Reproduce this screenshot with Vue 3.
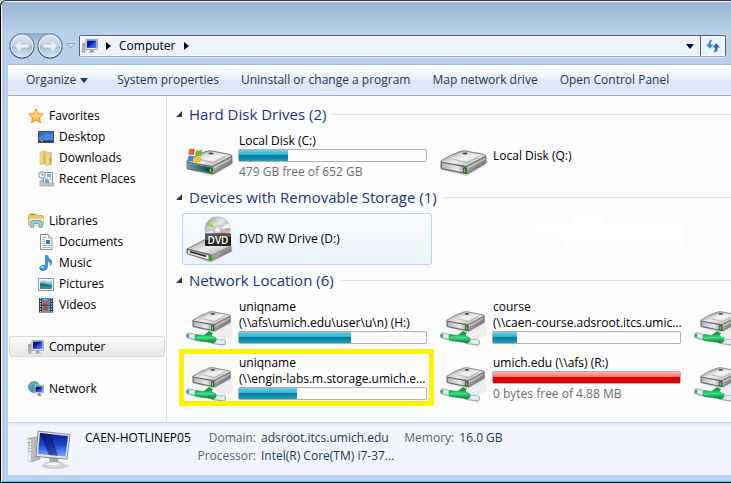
<template>
  <div class="window">
    <!-- 共享图标与渐变 -->
    <svg class="sprite" aria-hidden="true">
      <defs>
        <linearGradient id="metalTop" x1="0" y1="0" x2="1" y2="1">
          <stop offset="0" stop-color="#8f8f8f" /><stop offset="0.5" stop-color="#ececec" /><stop offset="1" stop-color="#9d9d9d" />
        </linearGradient>
        <linearGradient id="metalSide" x1="0" y1="0" x2="1" y2="1">
          <stop offset="0" stop-color="#dcdcdc" /><stop offset="1" stop-color="#4c4c4c" />
        </linearGradient>
        <linearGradient id="metalFront" x1="0" y1="0" x2="1" y2="0">
          <stop offset="0" stop-color="#b4b5bd" /><stop offset="0.7" stop-color="#e8e9ef" /><stop offset="1" stop-color="#9c9da2" />
        </linearGradient>
        <linearGradient id="tealFront" x1="0" y1="0" x2="1" y2="0">
          <stop offset="0" stop-color="#6f9db0" /><stop offset="1" stop-color="#0a4a56" />
        </linearGradient>
        <linearGradient id="green" x1="0" y1="0" x2="0" y2="1">
          <stop offset="0" stop-color="#0a9440" /><stop offset="0.45" stop-color="#3fe083" /><stop offset="1" stop-color="#04742c" />
        </linearGradient>
        <linearGradient id="screen" x1="0" y1="0" x2="1" y2="1">
          <stop offset="0" stop-color="#0a1fb4" /><stop offset="0.45" stop-color="#0a1596" /><stop offset="0.5" stop-color="#2246d8" /><stop offset="1" stop-color="#4b87f5" />
        </linearGradient>
        <linearGradient id="bigScreen" x1="0" y1="0" x2="0" y2="1">
          <stop offset="0" stop-color="#0b1c98" /><stop offset="0.5" stop-color="#1b44d0" /><stop offset="1" stop-color="#78adff" />
        </linearGradient>
        <linearGradient id="folder" x1="0" y1="0" x2="1" y2="0">
          <stop offset="0" stop-color="#fbe9a0" /><stop offset="1" stop-color="#dfb94a" />
        </linearGradient>
        <linearGradient id="star" x1="0" y1="0" x2="0" y2="1">
          <stop offset="0" stop-color="#fff3a8" /><stop offset="1" stop-color="#ffb226" />
        </linearGradient>
        <linearGradient id="disc" x1="0" y1="0" x2="1" y2="1">
          <stop offset="0" stop-color="#8b8b8b" /><stop offset="0.4" stop-color="#e9e9e9" /><stop offset="0.7" stop-color="#a9a9a9" /><stop offset="1" stop-color="#e0e0e0" />
        </linearGradient>
        <linearGradient id="orb" x1="0" y1="0" x2="0" y2="1">
          <stop offset="0" stop-color="#e0e9f3" /><stop offset="0.48" stop-color="#c3d3e4" /><stop offset="0.52" stop-color="#a5bcd3" /><stop offset="1" stop-color="#dceaf6" />
        </linearGradient>
        <linearGradient id="ring" x1="0" y1="0" x2="0" y2="1">
          <stop offset="0" stop-color="#8499b0" /><stop offset="1" stop-color="#46566a" />
        </linearGradient>

        <symbol id="box" viewBox="0 0 48 48">
          <path d="M3 38 26 44 46 33 48 30 45 27 20 36Z" fill="#000" opacity="0.15" />
          <path d="M1 29Q10 23 20 19.500Q23 18.500 26 19L44 22.500Q47 23.500 45 25L28 34Q26 35 23 34.500L2 31Q0 30 1 29Z" fill="url(#metalTop)" stroke="#6a6a6a" stroke-width="0.900" />
          <path d="M26 34.500 46 24V29.500Q46 31 44.500 32L28 41.500Q27 42 26 42Z" fill="url(#metalSide)" stroke="#555" stroke-width="0.600" />
          <path d="M28 36 45 27" stroke="#fff" stroke-width="1" opacity="0.600" />
          <path d="M0.500 31Q0.500 29.500 2 29.700L25 33.700Q27 34 27 36V40.500Q27 42.500 25 42L2 37.500Q0.500 37 0.500 35.500Z" fill="#6c6c6c" />
          <path d="M2 31 24 35V40.500L2 36Z" fill="url(#metalFront)" />
          <path d="M12 26 22 21.500 38 24.500 27 30Z" fill="#fff" opacity="0.350" />
          <path d="M14 27.500 27 30.500 39 24.500" fill="none" stroke="#9a9a9a" stroke-width="0.700" />
          <ellipse cx="25" cy="21.500" rx="2.500" ry="1" fill="#4a4a4a" />
          <path d="M23 35.500 25.800 36V41.500L23 41Z" fill="#174d0c" /><path d="M23.700 36.500H25.200V40.500H23.700Z" fill="#63e428" />
        </symbol>

        <symbol id="disk-c" viewBox="0 0 48 48">
          <use href="#box" width="48" height="48" />
          <path d="M1.500 31 23 35V40.500L1.500 36Z" fill="url(#tealFront)" />
          <path d="M3 17.500Q6 16 9 17.500L8 23Q5 22 2.500 23Z" fill="#ec5a28" />
          <path d="M10 18Q13 19.500 16.500 17.500L15.500 23.500Q12 25 9 23.500Z" fill="#79b63a" />
          <path d="M2.300 24.200Q5 23 7.800 24.200L6.800 30Q4 28.500 1 30Z" fill="#3b87dc" />
          <path d="M8.800 24.700Q12 26 15.300 24.500L14.500 30Q11 31.500 7.800 30Z" fill="#f9bd28" />
        </symbol>

        <symbol id="dvd" viewBox="0 0 48 48">
          <path d="M4 40 24 48 47 36 45 32Z" fill="#000" opacity="0.150" />
          <path d="M1 34 20 24 45 31 24 41Z" fill="url(#metalTop)" stroke="#6e6e6e" stroke-width="0.800" />
          <path d="M24 41 45.500 31V36.500L25 46.500Z" fill="url(#metalSide)" />
          <path d="M0.500 34.500Q0.500 33 2 33.500L24 39Q26 39.500 26 41.500V44.500Q26 46.500 24 46L2 39.500Q0.500 39 0.500 37.500Z" fill="#707070" />
          <path d="M2 35 22.500 40.500V44.500L2 38.500Z" fill="#e6e6e6" />
          <path d="M4 36.700 20 41.200" stroke="#222" stroke-width="1.500" />
          <path d="M23 40.500 25.500 41V45.500L23 45Z" fill="#2cae0c" />
          <circle cx="31.500" cy="14.500" r="12.700" fill="url(#disc)" stroke="#aaa" stroke-width="0.600" />
          <path d="M31.500 14.500 20 10 22 6Z" fill="#8ed92a" opacity="0.800" />
          <path d="M31.500 14.500 20 17 19 13Z" fill="#c9a4e6" opacity="0.700" />
          <path d="M31.500 14.500 43 8 44 13Z" fill="#f4f4f4" /><path d="M31.500 14.500 44 15 43 19Z" fill="#f1b3a2" opacity="0.700" />
          <circle cx="31.500" cy="14.500" r="4" fill="#d7d7d7" stroke="#999" stroke-width="0.500" /><circle cx="31.500" cy="14.500" r="1.600" fill="#fff" />
          <rect x="19" y="18.500" width="26" height="12.500" rx="1" fill="#222" /><path d="M19 19H45V22L19 25Z" fill="#777" opacity="0.600" />
          <text x="32" y="28.500" text-anchor="middle" font-family="Open Sans, sans-serif" font-size="10" font-weight="600" fill="#fff">DVD</text>
        </symbol>

        <symbol id="net-drive" viewBox="0 0 48 48">
          <path d="M28 34 45 23 47 37 36 43Z" fill="#000" opacity="0.060" />
          <use href="#box" x="6" y="-2" width="40" height="40" />
          <path d="M3 37.500 10 39.500" stroke="#8fa7ac" stroke-width="6" stroke-linecap="round" />
          <path d="M3 37.300 10 39.300" stroke="#dbebee" stroke-width="4.200" stroke-linecap="round" />
          <path d="M27 43 37 44.500" stroke="#94aaae" stroke-width="6" stroke-linecap="round" />
          <path d="M27 43 37 44.200" stroke="#deedf0" stroke-width="4.200" stroke-linecap="round" />
          <path d="M18 37 23 33 27 35 24 39Z" fill="#17a64c" />
          <path d="M9 38Q9 36.300 11 36.500L17 37.500 23 35.500 27 38.500 30 40Q30.500 45 27 44.800L11 42.700Q9 42.300 9 40.500Z" fill="url(#green)" stroke="#098a3a" stroke-width="0.500" />
          <ellipse cx="2" cy="37.500" rx="1.300" ry="2" fill="#58999e" />
        </symbol>

        <symbol id="pc-large" viewBox="0 0 44 40">
          <ellipse cx="28" cy="36" rx="14" ry="3" fill="#000" opacity="0.100" />
          <path d="M0 9 8 7 13 8V29L4 32 0 30Z" fill="#b9bbbd" stroke="#8b8d90" stroke-width="0.600" />
          <path d="M0 9 4 10V32L0 30Z" fill="#e7e8e9" /><path d="M1 15 3.300 15.500M1 18 3.300 18.500M1 21 3.300 21.500" stroke="#777" stroke-width="0.700" />
          <circle cx="2" cy="12.500" r="1.100" fill="#40d820" />
          <path d="M22 28H31L32 34H23Z" fill="#a3a5a7" />
          <ellipse cx="27" cy="35" rx="10" ry="3.300" fill="#d9dadb" stroke="#aaa" stroke-width="0.600" /><ellipse cx="26" cy="34" rx="6" ry="1.500" fill="#f8f8f8" />
          <path d="M11 1 43 4.500 40 29 9 26.500Z" fill="#e3e4e6" stroke="#777a80" stroke-width="0.800" />
          <path d="M13 3 41 6 38.500 26.500 11 24Z" fill="url(#bigScreen)" />
          <path d="M13 3 24 4.200 31 25.800 22 25Z" fill="#071066" opacity="0.550" />
        </symbol>

        <symbol id="pc" viewBox="0 0 16 16">
          <path d="M0.500 5.500 3 5V14.500L0.500 14Z" fill="#b8bbbf" stroke="#888" stroke-width="0.500" />
          <rect x="1" y="6" width="1" height="2" fill="#4fc42a" />
          <path d="M4 1.500H15.500V11.500H4Z" fill="#e4e6e9" stroke="#8b8f96" stroke-width="0.700" />
          <path d="M5 2.500H14.500V10H5Z" fill="url(#screen)" />
          <path d="M8 12H11.500V13.500L14 14.500H6L8 13.500Z" fill="#a0a3a8" />
        </symbol>
        <symbol id="favorites" viewBox="0 0 16 16">
          <path d="M8 0.800 10.100 5.600 15.400 6.100 11.400 9.600 12.600 14.800 8 12.100 3.400 14.800 4.600 9.600 0.600 6.100 5.900 5.600Z" fill="url(#star)" stroke="#e88a22" stroke-linejoin="round" />
        </symbol>
        <symbol id="desktop" viewBox="0 0 16 16">
          <rect x="0.500" y="2.500" width="15" height="11" fill="#2d6fc4" stroke="#3d4e66" />
          <path d="M1 9Q6 3 15 5V12H1Z" fill="#5aa0e8" opacity="0.500" /><rect x="1" y="11.500" width="14" height="1.500" fill="#20334f" />
          <rect x="2" y="10.500" width="1.500" height="1.500" fill="#f3792a" /><rect x="3.500" y="11.500" width="1.500" height="1.500" fill="#70c53a" />
        </symbol>
        <symbol id="downloads" viewBox="0 0 16 16">
          <path d="M2 2 7 1V14L2 14.500Z" fill="url(#folder)" stroke="#d0aa47" stroke-width="0.500" />
          <path d="M7 1.500 11 2.500V14.500L7 14Z" fill="#f9e79c" stroke="#cda53f" stroke-width="0.500" />
          <path d="M8 3.500 13.500 2.500V14.500L8 15.500Z" fill="url(#folder)" stroke="#cda53f" stroke-width="0.500" />
          <path d="M12.500 8V12" stroke="#4aa1d4" />
        </symbol>
        <symbol id="recent" viewBox="0 0 16 16">
          <rect x="5.500" y="1.500" width="9" height="11" fill="#f4f5f6" stroke="#9a9da2" />
          <rect x="9" y="3" width="4" height="3" fill="#65b7e7" /><path d="M7 8H10M11 8H13" stroke="#6b9bbd" />
          <rect x="7" y="9" width="4" height="3" fill="#50aeca" />
          <path d="M2 10 5 8.500V12H15.500V15H2Z" fill="#c6c9cd" stroke="#8f9297" stroke-width="0.600" />
          <circle cx="4" cy="4" r="3.300" fill="#f6f8f9" stroke="#8d9298" /><path d="M4 2V4H6" fill="none" stroke="#4c6e8c" stroke-width="0.800" />
        </symbol>
        <symbol id="libraries" viewBox="0 0 16 16">
          <path d="M0.500 2.500 2 1H8L9 2.500H15V12H0.500Z" fill="#eccb6b" stroke="#c49d3c" stroke-width="0.700" />
          <rect x="2.500" y="1" width="4" height="1.300" fill="#50b828" />
          <path d="M1 5H15.500V13H1Z" fill="#f9e8a3" stroke="#d5b155" stroke-width="0.500" />
          <path d="M2.500 14.500V10Q2.500 7.500 5 7.500H11.500Q14 7.500 14 10V14.500H11V11.500Q11 10.500 10 10.500H6.500Q5.500 10.500 5.500 11.500V14.500Z" fill="#8fd0f2" stroke="#4c9bcb" stroke-width="0.700" />
        </symbol>
        <symbol id="documents" viewBox="0 0 16 16">
          <path d="M2.500 0.500H10.500L14 4V15.500H2.500Z" fill="#fff" stroke="#8c9096" /><path d="M10.500 0.500V4H14" fill="#e4e6e8" stroke="#8c9096" stroke-width="0.700" />
          <path d="M4 3.500H9M4 5.500H7M4 7.500H7M4 9.500H7M4 11.500H12M4 13.500H12" stroke="#9ca7b8" stroke-width="0.800" /><rect x="8" y="6" width="4" height="4" fill="#3978bd" />
        </symbol>
        <symbol id="music" viewBox="0 0 16 16">
          <path d="M7.500 0.500H9.500Q10 3 13 5Q15 7.500 12.500 10.500Q13 7 9.500 6V12Q9 15.500 5 15.500Q1 15 1.500 12.500Q2.500 10 7.500 10.200Z" fill="#2f9ae3" stroke="#1972b7" stroke-width="0.600" />
          <ellipse cx="4.500" cy="12" rx="1.700" ry="1" fill="#a4dbff" />
        </symbol>
        <symbol id="pictures" viewBox="0 0 16 16">
          <rect x="0.500" y="2.500" width="15" height="12" fill="#fff" stroke="#8f9399" /><rect x="2" y="4" width="12" height="9" fill="#7fc5ed" />
          <path d="M2 7Q6 7 14 9V11H2Z" fill="#257a5a" /><path d="M2 10.500H14V13H2Z" fill="#2f8fbd" /><path d="M2 6Q5 4 9 6L14 5V4H2Z" fill="#d9f0fa" />
        </symbol>
        <symbol id="videos" viewBox="0 0 16 16">
          <rect x="1" y="1" width="14" height="14.500" fill="#2b3038" /><rect x="4" y="1" width="8" height="14.500" fill="#4f9fd8" />
          <path d="M2.500 1V15.500M13.500 1V15.500" stroke="#dfe3e8" stroke-width="1.300" stroke-dasharray="1.300 1.300" />
          <path d="M5 3 8 5 11 2.500V6L9 8H5Z" fill="#d1502b" /><path d="M5 10 8 9 11 11 9 14 5 13.500Z" fill="#bb4b31" /><path d="M4 8.300H12" stroke="#223" stroke-width="0.800" />
        </symbol>
        <symbol id="network" viewBox="0 0 16 16">
          <circle cx="6" cy="6" r="5.500" fill="#3c9ce0" stroke="#2877b4" stroke-width="0.600" />
          <path d="M1.500 4Q3 1 6.500 1L5 4 2.500 6Z" fill="#67c84a" /><path d="M7 2 10.500 3.500 10 5H7Z" fill="#8bda6a" /><path d="M3 8 6 8 5.500 11Z" fill="#4cb03a" />
          <rect x="6.500" y="4.500" width="9" height="7.500" fill="#e2e4e7" stroke="#85898f" stroke-width="0.600" /><rect x="7.500" y="5.500" width="7" height="5.500" fill="url(#screen)" />
          <path d="M10 12H12.500V14L14 15H9L10 14Z" fill="#8e9299" />
        </symbol>
      </defs>
    </svg>

    <header class="titlebar">
      <div class="address-row">
        <div class="nav-buttons">
          <div class="round-pair">
            <button class="round" aria-label="Back">
              <svg viewBox="0 0 26 26"><circle cx="13" cy="13" r="12" fill="url(#orb)" stroke="url(#ring)" stroke-width="1.300" /><circle cx="13" cy="13" r="11" fill="none" stroke="#eaf2fa" stroke-width="0.900" /><path d="M5 13 12 6.500V11H20V15H12V19.500Z" fill="#e6eff7" stroke="#b3c5d6" stroke-width="0.600" /></svg>
            </button>
            <button class="round" aria-label="Forward">
              <svg viewBox="0 0 26 26"><circle cx="13" cy="13" r="12" fill="url(#orb)" stroke="url(#ring)" stroke-width="1.300" /><circle cx="13" cy="13" r="11" fill="none" stroke="#eaf2fa" stroke-width="0.900" /><path d="M21 13 14 6.500V11H6V15H14V19.500Z" fill="#e6eff7" stroke="#b3c5d6" stroke-width="0.600" /></svg>
            </button>
          </div>
          <button class="history" aria-label="Recent pages">
            <svg viewBox="0 0 10 8"><path d="M1 1.500H9L5 6Z" fill="#d5e3f1" stroke="#8da4bd" /></svg>
          </button>
        </div>
        <div class="address">
          <svg class="icon16"><use href="#pc" /></svg>
          <svg class="crumb-arrow" viewBox="0 0 5 8"><path d="M0 0 5 4 0 8Z" /></svg>
          <a href="#" class="crumb">Computer</a>
          <svg class="crumb-arrow" viewBox="0 0 5 8"><path d="M0 0 5 4 0 8Z" /></svg>
          <button class="drop" aria-label="Previous locations">
            <svg viewBox="0 0 8 5"><path d="M0 0H8L4 5Z" fill="#00005e" /></svg>
          </button>
          <button class="refresh" aria-label="Refresh">
            <svg viewBox="0 0 14 14">
              <path d="M6.500 0.500Q2 1 2.500 5.500H0L3.800 9.800 7.500 5.500H5Q4.500 2.500 6.500 0.500Z" fill="#3290d6" />
              <path d="M7.500 13.500Q12 13 11.500 8.500H14L10.200 4.200 6.500 8.500H9Q9.500 11.500 7.500 13.500Z" fill="#2a68b0" />
            </svg>
          </button>
        </div>
      </div>
    </header>

    <div class="frame">
      <div class="toolbar">
        <button class="organize">Organize <svg viewBox="0 0 8 5"><path d="M0 0H8L4 5Z" fill="#1e395b" /></svg></button>
        <button v-for="cmd in commands" :key="cmd">{{ cmd }}</button>
      </div>

      <div class="body">
        <nav class="sidebar">
          <ul v-for="group in places" :key="group.name">
            <li v-for="item in [group, ...group.children]" :key="item.name">
              <a href="#" :class="{ child: item !== group, selected: item.name === 'Computer' }">
                <svg class="icon16"><use :href="'#' + item.icon" /></svg>{{ item.name }}
              </a>
            </li>
          </ul>
        </nav>

        <main class="content">
          <section v-for="section in sections" :key="section.title">
            <h2>
              <svg viewBox="0 0 6 6"><path d="M6 0V6H0Z" fill="#3a3a3a" /></svg>
              {{ section.title }}
            </h2>
            <div class="tiles">
              <div v-for="drive in section.drives" :key="drive.id" class="tile" :class="{ hover: drive.hover, marked: drive.marked }">
                <svg class="icon48"><use :href="'#' + drive.icon" /></svg>
                <div class="info">
                  <div v-for="line in drive.lines" :key="line" class="line">{{ line }}</div>
                  <div v-if="drive.used" class="bar" role="progressbar" :aria-valuenow="drive.used">
                    <div class="fill" :class="{ full: drive.used === 100 }" :style="{ width: drive.used + '%' }"></div>
                  </div>
                  <div v-if="drive.free" class="line free">{{ drive.free }}</div>
                </div>
              </div>
              <svg v-if="section.blank" class="blank" viewBox="0 0 147 32"><path d="M0 9H36V0H66V9H147V32H27V24H0Z" fill="#fff" /></svg>
            </div>
          </section>
        </main>
      </div>

      <footer class="details">
        <svg class="pc-large"><use href="#pc-large" /></svg>
        <dl>
          <dt class="host">CAEN-HOTLINEP05</dt>
          <dt>Domain:</dt>
          <dd>adsroot.itcs.umich.edu</dd>
          <dt>Memory:</dt>
          <dd>16.0 GB</dd>
          <dt class="processor">Processor:</dt>
          <dd>Intel(R) Core(TM) i7-37...</dd>
        </dl>
      </footer>
    </div>
  </div>
</template>

<script setup>
const commands = ['System properties', 'Uninstall or change a program', 'Map network drive', 'Open Control Panel']

const places = [
  {
    name: 'Favorites',
    icon: 'favorites',
    children: [
      { name: 'Desktop', icon: 'desktop' },
      { name: 'Downloads', icon: 'downloads' },
      { name: 'Recent Places', icon: 'recent' }
    ]
  },
  {
    name: 'Libraries',
    icon: 'libraries',
    children: [
      { name: 'Documents', icon: 'documents' },
      { name: 'Music', icon: 'music' },
      { name: 'Pictures', icon: 'pictures' },
      { name: 'Videos', icon: 'videos' }
    ]
  },
  { name: 'Computer', icon: 'pc', children: [] },
  { name: 'Network', icon: 'network', children: [] }
]

const sections = [
  {
    title: 'Hard Disk Drives (2)',
    drives: [
      { id: 'c', icon: 'disk-c', lines: ['Local Disk (C:)'], used: 26, free: '479 GB free of 652 GB' },
      { id: 'q', icon: 'box', lines: ['Local Disk (Q:)'] }
    ]
  },
  {
    title: 'Devices with Removable Storage (1)',
    blank: true,
    drives: [{ id: 'd', icon: 'dvd', lines: ['DVD RW Drive (D:)'], hover: true }]
  },
  {
    title: 'Network Location (6)',
    drives: [
      { id: 'h', icon: 'net-drive', lines: ['uniqname', '(\\\\afs\\umich.edu\\user\\u\\n) (H:)'], used: 60 },
      { id: 'course', icon: 'net-drive', lines: ['course', '(\\\\caen-course.adsroot.itcs.umic...'], used: 13 },
      { id: 'n3', icon: 'net-drive', lines: [] },
      { id: 'labs', icon: 'net-drive', lines: ['uniqname', '(\\\\engin-labs.m.storage.umich.e...'], used: 31, marked: true },
      { id: 'r', icon: 'net-drive', lines: ['umich.edu (\\\\afs) (R:)'], used: 100, free: '0 bytes free of 4.88 MB' },
      { id: 'n6', icon: 'net-drive', lines: [] }
    ]
  }
]
</script>

<style>
body {
  background: #b9d1ea;
}
</style>

<style scoped>
* {
  box-sizing: border-box;
}
.window {
  min-height: 100vh;
  display: flex;
  flex-direction: column;
  overflow: hidden;
  background: #b9d1ea;
  border-top: 1px solid #35353d;
  border-left: 1px solid #000;
  border-bottom: 1px solid #000;
  border-top-left-radius: 6px;
  box-shadow: inset 1px 1px 0 #fff, inset 0 -1px 0 #2fd0ee;
  font-family: "Open Sans", "Noto Sans", sans-serif;
  font-size: 12px;
  line-height: 16px;
  color: #000;
}
.sprite {
  position: absolute;
  width: 0;
  height: 0;
}
button {
  background: none;
  border: none;
  padding: 0;
  font: inherit;
  color: inherit;
}
a {
  color: inherit;
  text-decoration: none;
}
svg {
  display: block;
  flex: none;
}
.icon16 {
  width: 16px;
  height: 16px;
}
.titlebar {
  margin: 1px 0 0 1px;
  padding: 31px 5px 5px 7px;
  background: linear-gradient(#9ab3d0, #b9d1ea 32px, #b9cfea);
}
.address-row {
  display: flex;
  align-items: center;
}
.nav-buttons {
  display: flex;
  align-items: center;
  gap: 3px;
  margin-right: 3px;
}
.round-pair {
  display: flex;
  gap: 2px;
  border-radius: 13px;
  background: linear-gradient(#8fa9c6, #b3cae3 12px, #b9cfea 20px);
}
.round svg {
  width: 26px;
  height: 26px;
}
.history svg {
  width: 10px;
  height: 8px;
}
.address {
  flex: 1;
  display: flex;
  align-items: center;
  height: 22px;
  padding-left: 2px;
  background: #ebf2fa;
  border: 1px solid #585d6b;
  border-bottom-color: #a3adbb;
  border-radius: 2px;
  box-shadow: inset 0 0 0 1px #fafcff, 0 1px 0 #d5e3f4;
}
.crumb-arrow {
  width: 5px;
  height: 8px;
  margin: 0 8px;
}
.drop {
  margin-left: auto;
  padding: 0 6px;
}
.drop svg {
  width: 8px;
  height: 5px;
}
.refresh {
  align-self: stretch;
  width: 25px;
  border-left: 1px solid #585d6b;
}
.refresh svg {
  width: 14px;
  height: 14px;
  margin: 0 auto;
}
.frame {
  flex: 1;
  display: flex;
  flex-direction: column;
  margin: 0 0 7px 7px;
}
.toolbar {
  display: flex;
  align-items: center;
  gap: 22px;
  height: 32px;
  padding-left: 18px;
  border-top: 1px solid #a3bbd7;
  border-bottom: 1px solid #9baac8;
  background: linear-gradient(#fdfeff, #e9f1fa 14px, #dce6f4 15px, #dfe9f6 28px, #eaf2fb);
  color: #1e395b;
  white-space: nowrap;
}
.organize {
  display: flex;
  align-items: center;
  gap: 4px;
  margin-right: 7px;
}
.organize svg {
  width: 8px;
  height: 5px;
}
.body {
  flex: 1;
  display: flex;
  background: #fcfcfc;
}
.sidebar {
  flex: none;
  width: 159px;
  padding: 9px 1px 0;
  border-right: 1px solid #d6e5f5;
}
.sidebar ul {
  list-style: none;
  margin: 0 0 21px;
  padding: 0;
}
.sidebar a {
  display: flex;
  align-items: center;
  gap: 5px;
  height: 21px;
  padding-left: 18px;
  border: 1px solid transparent;
  border-radius: 3px;
}
.sidebar a.child {
  padding-left: 28px;
}
.sidebar a.selected {
  border-color: #d9d9d9;
  background: linear-gradient(#fafafa, #e6e6e6);
}
.content {
  flex: 1;
  min-width: 0;
  overflow: hidden;
  padding: 8px 0 0 9px;
}
.content section {
  margin-bottom: 5px;
}
h2 {
  display: flex;
  align-items: center;
  gap: 7px;
  margin: 0 0 6px;
  font-size: 15px;
  line-height: 20px;
  font-weight: 400;
  color: #1e3287;
  white-space: nowrap;
}
h2 svg {
  width: 6px;
  height: 6px;
}
h2::after {
  content: "";
  flex: 1;
  height: 1px;
  background: #e0e0e0;
}
.tiles {
  display: grid;
  grid-template-columns: repeat(3, 250px);
  gap: 4px;
  padding-left: 6px;
}
.tile {
  position: relative;
  display: flex;
  align-items: center;
  gap: 4px;
  height: 52px;
  padding: 0 5px 0 4px;
}
.tile.hover {
  background: linear-gradient(#fafbfe, #eaf2fc);
  border-radius: 3px;
  box-shadow: inset 0 0 0 1px #b8d6fb;
}
.tile.marked::after {
  content: "";
  position: absolute;
  inset: -3px -2px -2px -3px;
  border: 5px solid #fff200;
}
.icon48 {
  width: 48px;
  height: 48px;
}
.info {
  flex: 1;
  min-width: 0;
}
.line {
  padding-left: 1px;
  white-space: nowrap;
}
.free {
  color: #6d6d6d;
}
.bar {
  height: 13px;
  margin-bottom: 2px;
  border: 1px solid #b2b2b2;
  border-radius: 2px;
  background: #fdfdfd;
}
.fill {
  height: 100%;
  background: linear-gradient(#6fd0e8, #2fb0d0 45%, #067a9b 50%, #1aa3c0);
}
.fill.full {
  background: linear-gradient(#ffb5b5, #f56c6c 45%, #d90000 50%, #e60000);
}
.blank {
  width: 147px;
  height: 32px;
  margin: 2px 0 0 100px;
}
.details {
  display: flex;
  height: 53px;
  padding: 7px 0 0 19px;
  border-top: 1px solid #c7d5e8;
  background: linear-gradient(#dfe8f5, #f1f4fc 3px);
}
.pc-large {
  width: 44px;
  height: 40px;
}
dl {
  display: grid;
  grid-template-columns: repeat(5, auto);
  grid-auto-rows: 18px;
  justify-content: start;
  margin: 0 0 0 14px;
  white-space: nowrap;
}
dt {
  padding-right: 5px;
  text-align: right;
  color: #5a6779;
}
dt.host {
  padding-right: 18px;
  color: #000;
}
dt.processor {
  grid-column: 1 / 3;
}
dd {
  margin: 0;
  padding-right: 10px;
  color: #1e395b;
}
</style>
